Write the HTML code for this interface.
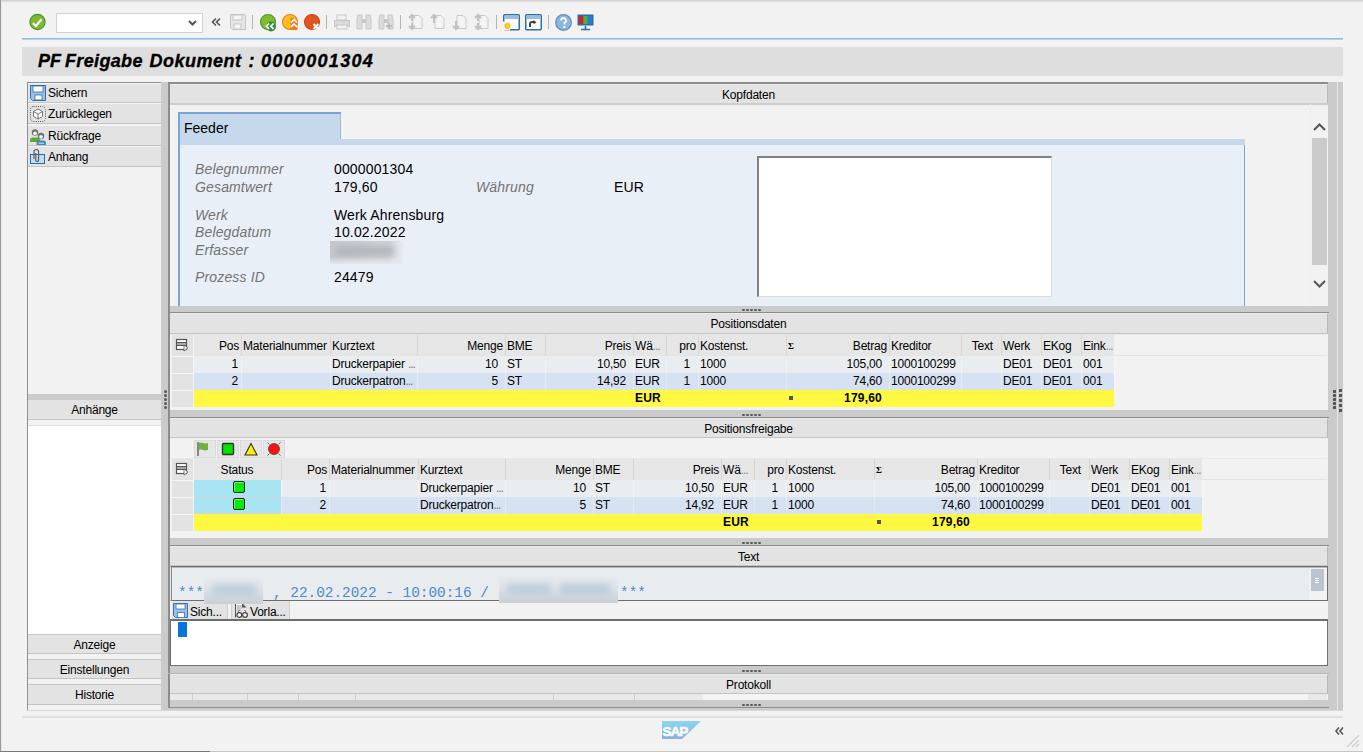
<!DOCTYPE html><html><head><meta charset="utf-8"><style>
*{margin:0;padding:0;box-sizing:border-box}
html,body{width:1363px;height:752px;overflow:hidden;background:#f2f2f2;font-family:"Liberation Sans",sans-serif;font-size:12px;color:#000}
div{position:absolute}
.t{white-space:nowrap;line-height:14px;letter-spacing:-0.2px}
.r{text-align:right}
.c{text-align:center}
svg{position:absolute;overflow:visible}
</style></head><body>
<div style="left:0px;top:0px;width:1363px;height:1px;background:#d2d2d2"></div>
<div style="left:0px;top:1px;width:1363px;height:1px;background:#e2e2e2"></div>
<div style="left:0px;top:2px;width:1363px;height:1px;background:#ebebeb"></div>
<div style="left:0px;top:0px;width:1px;height:752px;background:#9a9a9a"></div>
<div style="left:1px;top:1px;width:1px;height:751px;background:#e6e6e6"></div>
<div style="left:0px;top:751px;width:210px;height:1px;background:#78787c"></div>
<div style="left:210px;top:751px;width:1153px;height:1px;background:#c6c6c8"></div>
<svg style="left:29px;top:14px" width="17" height="16" viewBox="0 0 17 16"><circle cx="8.5" cy="8" r="7.6" fill="#7dbb2a" stroke="#4f8f3c" stroke-width="1.2"/><path d="M3.8 9.3L6.8 11.9L12.6 5.2" stroke="#fff" stroke-width="2.1" fill="none"/></svg>
<div style="left:56px;top:13px;width:147px;height:20px;background:#fff;border:1px solid #d2d2d2"></div>
<svg style="left:188px;top:20px" width="9" height="6" viewBox="0 0 9 6"><path d="M1 1l3.5 3.5L8 1" stroke="#555" stroke-width="2" fill="none"/></svg>
<svg style="left:211px;top:18px" width="10" height="8" viewBox="0 0 10 8"><path d="M5 0.5L1.5 4L5 7.5M9 0.5L5.5 4L9 7.5" stroke="#555" stroke-width="1.6" fill="none"/></svg>
<svg style="left:230px;top:14px" width="16" height="16" viewBox="0 0 16 16"><path d="M0.5 0.5h14l1 1v14h-13l-2-2z" fill="#e6e6e6" stroke="#c4c4c4"/><rect x="3" y="1" width="9" height="5" fill="#f6f6f6" stroke="#c4c4c4" stroke-width="1"/><rect x="4" y="10" width="7" height="5" fill="#f6f6f6" stroke="#c4c4c4"/></svg>
<div style="left:252px;top:15px;width:1px;height:14px;background:#b4b4b4"></div>
<svg style="left:260px;top:14px" width="16" height="16" viewBox="0 0 16 16"><circle cx="8" cy="8" r="7.5" fill="#80bd2a" stroke="#4f8f3c" stroke-width="1.1"/><circle cx="11" cy="12.5" r="5" fill="#3f8a3a"/><path d="M9 9.5l-2.7 2.7 2.7 2.7M13.5 9.5l-2.7 2.7 2.7 2.7" stroke="#fff" stroke-width="1.7" fill="none"/></svg>
<svg style="left:282px;top:14px" width="16" height="16" viewBox="0 0 16 16"><circle cx="8" cy="8" r="7.5" fill="#fbc01a" stroke="#ea7a22" stroke-width="1.1"/><path d="M8.5 3.5a7.5 7.5 0 0 1 7 5v7.5H8.5z" fill="#ec7a22"/><path d="M9 8.5l3-3 3 3M9 13l3-3 3 3" stroke="#fff" stroke-width="1.7" fill="none"/></svg>
<svg style="left:304px;top:14px" width="16" height="16" viewBox="0 0 16 16"><circle cx="8" cy="8" r="7.5" fill="#e0561c" stroke="#c9461a" stroke-width="1.1"/><path d="M9.5 10l5 5M14.5 10l-5 5" stroke="#fff" stroke-width="1.9"/></svg>
<div style="left:326px;top:15px;width:1px;height:14px;background:#b4b4b4"></div>
<svg style="left:334px;top:14px" width="16" height="16" viewBox="0 0 16 16"><rect x="3" y="1" width="9" height="5" fill="none" stroke="#c8c8c8"/><rect x="0.5" y="6.5" width="15" height="6" fill="#dadada" stroke="#c8c8c8"/><rect x="3" y="11" width="10" height="4" fill="#f2f2f2" stroke="#c8c8c8"/></svg>
<svg style="left:356px;top:14px" width="16" height="16" viewBox="0 0 16 16"><path d="M2 1h4v14H1V5zM10 1h4l1 4v10h-5z" fill="#dcdcdc" stroke="#c8c8c8"/><rect x="6" y="5" width="4" height="4" fill="#c8c8c8"/></svg>
<svg style="left:378px;top:14px" width="16" height="16" viewBox="0 0 16 16"><path d="M2 1h4v14H1V5zM10 1h4l1 4v10h-5z" fill="#dcdcdc" stroke="#c8c8c8"/><rect x="6" y="5" width="4" height="4" fill="#c8c8c8"/><path d="M11 9v6M8 12h6" stroke="#bdbdbd" stroke-width="2"/></svg>
<div style="left:400px;top:15px;width:1px;height:14px;background:#b4b4b4"></div>
<svg style="left:408px;top:14px" width="16" height="16" viewBox="0 0 16 16"><path d="M5 1.5h6l3 3v10H5z" fill="#f4f4f4" stroke="#c8c8c8"/><path d="M4 0v7M1 4l3-3 3 3M4 9v7M1 12l3 3 3-3" stroke="#c2c2c2" stroke-width="2" fill="none"/></svg>
<svg style="left:430px;top:14px" width="16" height="16" viewBox="0 0 16 16"><path d="M5 1.5h6l3 3v10H5z" fill="#f4f4f4" stroke="#c8c8c8"/><path d="M4 1v8M1 4l3-3 3 3" stroke="#c2c2c2" stroke-width="2" fill="none"/></svg>
<svg style="left:452px;top:14px" width="16" height="16" viewBox="0 0 16 16"><path d="M5 1.5h6l3 3v10H5z" fill="#f4f4f4" stroke="#c8c8c8"/><path d="M4 7v8M1 12l3 3 3-3" stroke="#c2c2c2" stroke-width="2" fill="none"/></svg>
<svg style="left:474px;top:14px" width="16" height="16" viewBox="0 0 16 16"><path d="M5 1.5h6l3 3v10H5z" fill="#f4f4f4" stroke="#c8c8c8"/><path d="M4 0v7M1 4l3-3 3 3M4 9v7M1 12l3 3 3-3" stroke="#c2c2c2" stroke-width="2" fill="none"/></svg>
<div style="left:496px;top:15px;width:1px;height:14px;background:#b4b4b4"></div>
<svg style="left:503px;top:14px" width="17" height="17" viewBox="0 0 17 17"><rect x="0.75" y="0.75" width="15.5" height="15" rx="1" fill="#fff" stroke="#2f6ea6" stroke-width="1.5"/><rect x="1.5" y="1.5" width="14" height="3.5" fill="#9dbde0"/><path d="M0 12h7" stroke="#f2f2f2" stroke-width="9"/><circle cx="4.5" cy="12" r="3" fill="#fbb917"/><circle cx="4.5" cy="12" r="1.8" fill="#ffd21a"/></svg>
<svg style="left:525px;top:14px" width="17" height="17" viewBox="0 0 17 17"><rect x="0.75" y="0.75" width="15.5" height="15" rx="1" fill="#fff" stroke="#2f6ea6" stroke-width="1.5"/><rect x="1.5" y="1.5" width="14" height="3.5" fill="#9dbde0"/><path d="M5 13v-3q0-2 2-2h2" stroke="#444" stroke-width="2" fill="none"/><path d="M8.5 6v4.5l3-2.25z" fill="#444"/></svg>
<div style="left:548px;top:15px;width:1px;height:14px;background:#b4b4b4"></div>
<svg style="left:555px;top:14px" width="17" height="17" viewBox="0 0 17 17"><circle cx="8.5" cy="8.5" r="7.8" fill="#8fb5dd" stroke="#5d8fc4" stroke-width="1.3"/><path d="M6 6.5a2.5 2.5 0 1 1 3.5 2.3V10.5" stroke="#fff" stroke-width="1.8" fill="none"/><rect x="8.3" y="12" width="2" height="2" fill="#fff"/></svg>
<svg style="left:577px;top:14px" width="17" height="16" viewBox="0 0 17 16"><rect x="0.5" y="0.5" width="16" height="11" fill="#2e6ea6"/><rect x="2" y="2" width="4.3" height="8" fill="#e11c1c"/><rect x="6.3" y="2" width="4.4" height="8" fill="#4bb33a"/><rect x="10.7" y="2" width="4.3" height="8" fill="#2b7ad1"/><path d="M8.5 12v3M4 15.5h9" stroke="#2e6ea6" stroke-width="1.6"/></svg>
<div style="left:22px;top:38px;width:1321px;height:1px;background:#8cbfe0"></div>
<div style="left:22px;top:39px;width:1321px;height:1px;background:#b2d5ec"></div>
<div style="left:22px;top:47px;width:1321px;height:29px;background:#dedede"></div>
<div class="t" style="left:38px;top:50px;font-size:18px;font-weight:bold;font-style:italic;line-height:22px;letter-spacing:0;-webkit-text-stroke:0.35px #000;">PF</div>
<div class="t" style="left:65px;top:50px;font-size:18px;font-weight:bold;font-style:italic;line-height:22px;letter-spacing:0;-webkit-text-stroke:0.35px #000;letter-spacing:0.35px">Freigabe</div>
<div class="t" style="left:149.5px;top:50px;font-size:18px;font-weight:bold;font-style:italic;line-height:22px;letter-spacing:0;-webkit-text-stroke:0.35px #000;letter-spacing:0.5px">Dokument</div>
<div class="t" style="left:248.5px;top:50px;font-size:18px;font-weight:bold;font-style:italic;line-height:22px;letter-spacing:0;-webkit-text-stroke:0.35px #000;">:</div>
<div class="t" style="left:261px;top:50px;font-size:18px;font-weight:bold;font-style:italic;line-height:22px;letter-spacing:0;-webkit-text-stroke:0.35px #000;letter-spacing:1.3px">0000001304</div>
<div style="left:27px;top:82px;width:134px;height:629px;background:#f2f2f2"></div>
<div style="left:27px;top:82px;width:1px;height:629px;background:#8f8f8f"></div>
<div style="left:27px;top:82px;width:134px;height:1px;background:#8f8f8f"></div>
<div style="left:28px;top:83px;width:133px;height:20px;background:#e3e3e3;border-top:1px solid #f4f4f4;border-bottom:1px solid #c4c4c4"></div>
<svg style="left:30px;top:85px" width="16" height="16" viewBox="0 0 16 16"><path d="M0.5 0.5h15v15h-13l-2-2z" fill="#9dc0e3" stroke="#2a70ae"/><rect x="3" y="1" width="10" height="6" fill="#fff" stroke="#2a70ae" stroke-width="0.8"/><rect x="5" y="10" width="7" height="5" fill="#fff" stroke="#2a70ae" stroke-width="0.8"/></svg>
<div class="t" style="left:48px;top:86px;">Sichern</div>
<div style="left:28px;top:103px;width:133px;height:21px;background:#e3e3e3;border-top:1px solid #f4f4f4;border-bottom:1px solid #c4c4c4"></div>
<svg style="left:30px;top:106px" width="16" height="16" viewBox="0 0 16 16"><rect x="0.5" y="0.5" width="15" height="15" rx="3" fill="none" stroke="#555" stroke-dasharray="1 1.2"/><path d="M8 3l4.5 2.5v5L8 13l-4.5-2.5v-5z" fill="#fff" stroke="#777"/><path d="M3.5 5.5L8 8l4.5-2.5M8 8v5" stroke="#777" fill="none"/></svg>
<div class="t" style="left:48px;top:107px;">Zurücklegen</div>
<div style="left:28px;top:125px;width:133px;height:21px;background:#e3e3e3;border-top:1px solid #f4f4f4;border-bottom:1px solid #c4c4c4"></div>
<svg style="left:30px;top:129px" width="16" height="16" viewBox="0 0 16 16"><circle cx="5" cy="3.5" r="3.2" fill="#707070"/><circle cx="5" cy="4.3" r="1.9" fill="#f4f4f4"/><path d="M0 11.5q0-3 3-3h4q3 0 3 3v1.5H0z" fill="#5aab32"/><circle cx="11" cy="7" r="3.2" fill="#707070"/><circle cx="11" cy="7.8" r="1.9" fill="#f4f4f4"/><path d="M6.5 14.5q0-3 3-3h3.5q3 0 3 3v1.5h-9.5z" fill="#3a88c6"/><path d="M8.5 14.2h5.5" stroke="#d9ecf9" stroke-width="1"/></svg>
<div class="t" style="left:48px;top:129px;">Rückfrage</div>
<div style="left:28px;top:146px;width:133px;height:21px;background:#e3e3e3;border-top:1px solid #f4f4f4;border-bottom:1px solid #c4c4c4"></div>
<svg style="left:30px;top:149px" width="16" height="16" viewBox="0 0 16 16"><rect x="0.5" y="5.5" width="14" height="9" fill="#c5dcf0" stroke="#2070b0"/><path d="M4 10V2.8a2.3 2.3 0 0 1 4.6 0V11a1.4 1.4 0 0 1-2.8 0V4" stroke="#555" stroke-width="1.1" fill="none"/></svg>
<div class="t" style="left:48px;top:150px;">Anhang</div>
<div style="left:28px;top:394px;width:133px;height:6px;background:#cbcbcb"></div>
<div style="left:28px;top:400px;width:133px;height:20px;background:#e3e3e3;border-bottom:1px solid #c4c4c4"></div>
<div class="t" style="left:28px;top:403px;width:133px;text-align:center">Anhänge</div>
<div style="left:28px;top:421px;width:133px;height:5px;background:#f2f2f2;border-bottom:1px solid #e0e0e0"></div>
<div style="left:28px;top:426px;width:133px;height:208px;background:#fff"></div>
<div style="left:28px;top:634px;width:133px;height:20px;background:#e3e3e3;border-top:1px solid #c8c8c8;border-bottom:1px solid #c4c4c4"></div>
<div class="t" style="left:28px;top:638px;width:133px;text-align:center">Anzeige</div>
<div style="left:28px;top:659px;width:133px;height:20px;background:#e3e3e3;border-top:1px solid #c8c8c8;border-bottom:1px solid #c4c4c4"></div>
<div class="t" style="left:28px;top:663px;width:133px;text-align:center">Einstellungen</div>
<div style="left:28px;top:684px;width:133px;height:21px;background:#e3e3e3;border-top:1px solid #c8c8c8;border-bottom:1px solid #c4c4c4"></div>
<div class="t" style="left:28px;top:688px;width:133px;text-align:center">Historie</div>
<div style="left:161px;top:82px;width:7px;height:629px;background:#cbcbcb"></div>
<div style="left:164px;top:390px;width:3px;height:3px;background:#5a5a5a;border-radius:1.5px"></div>
<div style="left:164px;top:394px;width:3px;height:3px;background:#5a5a5a;border-radius:1.5px"></div>
<div style="left:164px;top:398px;width:3px;height:3px;background:#5a5a5a;border-radius:1.5px"></div>
<div style="left:164px;top:402px;width:3px;height:3px;background:#5a5a5a;border-radius:1.5px"></div>
<div style="left:164px;top:406px;width:3px;height:3px;background:#5a5a5a;border-radius:1.5px"></div>
<div style="left:168px;top:82px;width:1160px;height:629px;background:#f2f2f2"></div>
<div style="left:168px;top:82px;width:2px;height:629px;background:#8c8c8c"></div>
<div style="left:168px;top:82px;width:1161px;height:2px;background:#8c8c8c"></div>
<div style="left:1328px;top:82px;width:9px;height:629px;background:#cbcbcb"></div>
<div style="left:1337px;top:82px;width:1px;height:629px;background:#e4e4e4"></div>
<div style="left:1338px;top:82px;width:5px;height:629px;background:#cbcbcb"></div>
<div style="left:1333px;top:390px;width:3px;height:3px;background:#555"></div>
<div style="left:1339px;top:389px;width:3px;height:3px;background:#555"></div>
<div style="left:1333px;top:394px;width:3px;height:3px;background:#555"></div>
<div style="left:1339px;top:394px;width:3px;height:3px;background:#555"></div>
<div style="left:1333px;top:398px;width:3px;height:3px;background:#555"></div>
<div style="left:1339px;top:399px;width:3px;height:3px;background:#555"></div>
<div style="left:1333px;top:402px;width:3px;height:3px;background:#555"></div>
<div style="left:1339px;top:404px;width:3px;height:3px;background:#555"></div>
<div style="left:1333px;top:406px;width:3px;height:3px;background:#555"></div>
<div style="left:1339px;top:409px;width:3px;height:3px;background:#555"></div>
<div style="left:170px;top:84px;width:1158px;height:20px;background:#e3e3e3;border-top:1px solid #ebebeb;border-bottom:1px solid #c4c4c4;border-right:1px solid #b8b8b8"></div>
<div class="t" style="left:170px;top:88px;width:1157px;text-align:center">Kopfdaten</div>
<div style="left:170px;top:103px;width:1158px;height:2px;background:#cdcdcd"></div>
<svg style="left:1313px;top:123px" width="13" height="8" viewBox="0 0 13 8"><path d="M1 7l5.5-5.5L12 7" stroke="#555" stroke-width="2" fill="none"/></svg>
<div style="left:1312px;top:138px;width:15px;height:127px;background:#cbcbcb"></div>
<svg style="left:1313px;top:280px" width="13" height="8" viewBox="0 0 13 8"><path d="M1 1l5.5 5.5L12 1" stroke="#555" stroke-width="2" fill="none"/></svg>
<div style="left:1310px;top:104px;width:1px;height:202px;background:#eeeeee"></div>
<div style="left:178px;top:112px;width:163px;height:27px;background:#c6d9ec;border-top:2px solid #7ba3d3;border-left:2px solid #7ba3d3;border-right:1px solid #97b8de"></div>
<div class="t" style="left:184px;top:120px;font-size:14px;line-height:16px;letter-spacing:0">Feeder</div>
<div style="left:178px;top:139px;width:1067px;height:6px;background:#c6d9ec;border-left:2px solid #7ba3d3"></div>
<div style="left:178px;top:145px;width:1067px;height:161px;background:#e9eff7;border-left:2px solid #7ba3d3;border-right:1px solid #7ba3d3"></div>
<div class="t" style="left:195px;top:161px;font-size:14px;line-height:16px;font-style:italic;color:#737373;letter-spacing:0.15px">Belegnummer</div>
<div class="t" style="left:334px;top:161px;font-size:14px;line-height:16px;letter-spacing:0.15px">0000001304</div>
<div class="t" style="left:195px;top:179px;font-size:14px;line-height:16px;font-style:italic;color:#737373;letter-spacing:0.15px">Gesamtwert</div>
<div class="t" style="left:334px;top:179px;font-size:14px;line-height:16px;letter-spacing:0.15px">179,60</div>
<div class="t" style="left:195px;top:207px;font-size:14px;line-height:16px;font-style:italic;color:#737373;letter-spacing:0.15px">Werk</div>
<div class="t" style="left:334px;top:207px;font-size:14px;line-height:16px;letter-spacing:0.15px">Werk Ahrensburg</div>
<div class="t" style="left:195px;top:224px;font-size:14px;line-height:16px;font-style:italic;color:#737373;letter-spacing:0.15px">Belegdatum</div>
<div class="t" style="left:334px;top:224px;font-size:14px;line-height:16px;letter-spacing:0.15px">10.02.2022</div>
<div class="t" style="left:195px;top:242px;font-size:14px;line-height:16px;font-style:italic;color:#737373;letter-spacing:0.15px">Erfasser</div>
<div class="t" style="left:195px;top:269px;font-size:14px;line-height:16px;font-style:italic;color:#737373;letter-spacing:0.15px">Prozess ID</div>
<div class="t" style="left:334px;top:269px;font-size:14px;line-height:16px;letter-spacing:0.15px">24479</div>
<div class="t" style="left:476px;top:179px;font-size:14px;line-height:16px;font-style:italic;color:#737373;letter-spacing:0.15px">Währung</div>
<div class="t" style="left:614px;top:179px;font-size:14px;line-height:16px;letter-spacing:0.15px">EUR</div>
<div style="left:757px;top:156px;width:295px;height:141px;background:#fff;border-top:2px solid #808080;border-left:2px solid #808080;border-right:1px solid #dcdcdc;border-bottom:1px solid #dcdcdc"></div>
<div style="left:170px;top:306px;width:1158px;height:6px;background:#cbcbcb"></div>
<div style="left:168px;top:312px;width:1161px;height:1px;background:#8c8c8c"></div>
<div style="left:170px;top:313px;width:1158px;height:21px;background:#e3e3e3;border-top:1px solid #ebebeb;border-bottom:1px solid #c4c4c4;border-right:1px solid #b8b8b8"></div>
<div class="t" style="left:170px;top:317px;width:1157px;text-align:center">Positionsdaten</div>
<div style="left:742px;top:309px;width:3px;height:2px;background:#5a5a5a;border-radius:1px"></div>
<div style="left:746px;top:309px;width:3px;height:2px;background:#5a5a5a;border-radius:1px"></div>
<div style="left:750px;top:309px;width:3px;height:2px;background:#5a5a5a;border-radius:1px"></div>
<div style="left:754px;top:309px;width:3px;height:2px;background:#5a5a5a;border-radius:1px"></div>
<div style="left:758px;top:309px;width:3px;height:2px;background:#5a5a5a;border-radius:1px"></div>
<div style="left:170px;top:334px;width:1157px;height:22px;background:#f2f2f2"></div>
<div style="left:172px;top:335px;width:21px;height:21px;background:#e3e3e3"></div>
<svg style="left:176px;top:339px" width="13" height="13" viewBox="0 0 13 13"><rect x="0.5" y="0.5" width="10" height="10" fill="#fff" stroke="#555" stroke-width="1.2"/><path d="M1 3.5h9M1 6.5h9" stroke="#555"/><rect x="1" y="4" width="9" height="2" fill="#aaa"/><path d="M8 6l4 3-4 3z" fill="#fff" stroke="#555" stroke-width="0.8"/></svg>
<div style="left:194px;top:335px;width:920px;height:21px;background:#e6e6e6"></div>
<div style="left:193px;top:356px;width:1134px;height:0px;"></div>
<div style="left:241px;top:335px;width:1px;height:21px;background:#d6d6d6"></div>
<div class="t" style="left:193px;top:339px;width:46px;text-align:right">Pos</div>
<div style="left:330px;top:335px;width:1px;height:21px;background:#d6d6d6"></div>
<div class="t" style="left:243px;top:339px;">Materialnummer</div>
<div style="left:417px;top:335px;width:1px;height:21px;background:#d6d6d6"></div>
<div class="t" style="left:332px;top:339px;">Kurztext</div>
<div style="left:505px;top:335px;width:1px;height:21px;background:#d6d6d6"></div>
<div class="t" style="left:417px;top:339px;width:86px;text-align:right">Menge</div>
<div style="left:545px;top:335px;width:1px;height:21px;background:#d6d6d6"></div>
<div class="t" style="left:507px;top:339px;">BME</div>
<div style="left:633px;top:335px;width:1px;height:21px;background:#d6d6d6"></div>
<div class="t" style="left:545px;top:339px;width:86px;text-align:right">Preis</div>
<div style="left:666px;top:335px;width:1px;height:21px;background:#d6d6d6"></div>
<div class="t" style="left:635px;top:339px;">Wä<span style="letter-spacing:-1px;color:#888">...</span></div>
<div style="left:698px;top:335px;width:1px;height:21px;background:#d6d6d6"></div>
<div class="t" style="left:666px;top:339px;width:30px;text-align:right">pro</div>
<div style="left:786px;top:335px;width:1px;height:21px;background:#d6d6d6"></div>
<div class="t" style="left:700px;top:339px;">Kostenst.</div>
<div style="left:889px;top:335px;width:1px;height:21px;background:#d6d6d6"></div>
<div class="t" style="left:786px;top:339px;width:101px;text-align:right">Betrag</div>
<div style="left:961px;top:335px;width:1px;height:21px;background:#d6d6d6"></div>
<div class="t" style="left:891px;top:339px;">Kreditor</div>
<div style="left:1001px;top:335px;width:1px;height:21px;background:#d6d6d6"></div>
<div class="t" style="left:961px;top:339px;width:32px;text-align:right">Text</div>
<div style="left:1041px;top:335px;width:1px;height:21px;background:#d6d6d6"></div>
<div class="t" style="left:1003px;top:339px;">Werk</div>
<div style="left:1081px;top:335px;width:1px;height:21px;background:#d6d6d6"></div>
<div class="t" style="left:1043px;top:339px;">EKog</div>
<div class="t" style="left:1083px;top:339px;">Eink<span style="letter-spacing:-1px;color:#888">...</span></div>
<div style="left:1114px;top:355px;width:213px;height:1px;background:#e4e4e4"></div>
<div style="left:170px;top:334px;width:1157px;height:1px;background:#e8e8e8"></div>
<div style="left:172px;top:356px;width:21px;height:17px;background:#e3e3e3;border-top:1px solid #f6f6f6"></div>
<div style="left:194px;top:356px;width:920px;height:17px;background:#eaedf0"></div>
<div style="left:241px;top:356px;width:1px;height:17px;background:rgba(255,255,255,0.3)"></div>
<div class="t" style="left:193px;top:357px;width:45px;text-align:right">1</div>
<div style="left:330px;top:356px;width:1px;height:17px;background:rgba(255,255,255,0.3)"></div>
<div style="left:417px;top:356px;width:1px;height:17px;background:rgba(255,255,255,0.3)"></div>
<div class="t" style="left:332px;top:357px;">Druckerpapier <span style="color:#777;letter-spacing:-1px">...</span></div>
<div style="left:505px;top:356px;width:1px;height:17px;background:rgba(255,255,255,0.3)"></div>
<div class="t" style="left:417px;top:357px;width:81px;text-align:right">10</div>
<div style="left:545px;top:356px;width:1px;height:17px;background:rgba(255,255,255,0.3)"></div>
<div class="t" style="left:507px;top:357px;">ST</div>
<div style="left:633px;top:356px;width:1px;height:17px;background:rgba(255,255,255,0.3)"></div>
<div class="t" style="left:545px;top:357px;width:81px;text-align:right">10,50</div>
<div style="left:666px;top:356px;width:1px;height:17px;background:rgba(255,255,255,0.3)"></div>
<div class="t" style="left:635px;top:357px;">EUR</div>
<div style="left:698px;top:356px;width:1px;height:17px;background:rgba(255,255,255,0.3)"></div>
<div class="t" style="left:666px;top:357px;width:24px;text-align:right">1</div>
<div style="left:786px;top:356px;width:1px;height:17px;background:rgba(255,255,255,0.3)"></div>
<div class="t" style="left:700px;top:357px;">1000</div>
<div style="left:889px;top:356px;width:1px;height:17px;background:rgba(255,255,255,0.3)"></div>
<div class="t" style="left:786px;top:357px;width:96px;text-align:right">105,00</div>
<div style="left:961px;top:356px;width:1px;height:17px;background:rgba(255,255,255,0.3)"></div>
<div class="t" style="left:891px;top:357px;">1000100299</div>
<div style="left:1001px;top:356px;width:1px;height:17px;background:rgba(255,255,255,0.3)"></div>
<div style="left:1041px;top:356px;width:1px;height:17px;background:rgba(255,255,255,0.3)"></div>
<div class="t" style="left:1003px;top:357px;">DE01</div>
<div style="left:1081px;top:356px;width:1px;height:17px;background:rgba(255,255,255,0.3)"></div>
<div class="t" style="left:1043px;top:357px;">DE01</div>
<div style="left:1114px;top:356px;width:1px;height:17px;background:rgba(255,255,255,0.3)"></div>
<div class="t" style="left:1083px;top:357px;">001</div>
<div style="left:172px;top:373px;width:21px;height:17px;background:#e3e3e3;border-top:1px solid #f6f6f6"></div>
<div style="left:194px;top:373px;width:920px;height:17px;background:#d6e2f1"></div>
<div style="left:241px;top:373px;width:1px;height:17px;background:rgba(255,255,255,0.3)"></div>
<div class="t" style="left:193px;top:374px;width:45px;text-align:right">2</div>
<div style="left:330px;top:373px;width:1px;height:17px;background:rgba(255,255,255,0.3)"></div>
<div style="left:417px;top:373px;width:1px;height:17px;background:rgba(255,255,255,0.3)"></div>
<div class="t" style="left:332px;top:374px;">Druckerpatron<span style="color:#777;letter-spacing:-1px">...</span></div>
<div style="left:505px;top:373px;width:1px;height:17px;background:rgba(255,255,255,0.3)"></div>
<div class="t" style="left:417px;top:374px;width:81px;text-align:right">5</div>
<div style="left:545px;top:373px;width:1px;height:17px;background:rgba(255,255,255,0.3)"></div>
<div class="t" style="left:507px;top:374px;">ST</div>
<div style="left:633px;top:373px;width:1px;height:17px;background:rgba(255,255,255,0.3)"></div>
<div class="t" style="left:545px;top:374px;width:81px;text-align:right">14,92</div>
<div style="left:666px;top:373px;width:1px;height:17px;background:rgba(255,255,255,0.3)"></div>
<div class="t" style="left:635px;top:374px;">EUR</div>
<div style="left:698px;top:373px;width:1px;height:17px;background:rgba(255,255,255,0.3)"></div>
<div class="t" style="left:666px;top:374px;width:24px;text-align:right">1</div>
<div style="left:786px;top:373px;width:1px;height:17px;background:rgba(255,255,255,0.3)"></div>
<div class="t" style="left:700px;top:374px;">1000</div>
<div style="left:889px;top:373px;width:1px;height:17px;background:rgba(255,255,255,0.3)"></div>
<div class="t" style="left:786px;top:374px;width:96px;text-align:right">74,60</div>
<div style="left:961px;top:373px;width:1px;height:17px;background:rgba(255,255,255,0.3)"></div>
<div class="t" style="left:891px;top:374px;">1000100299</div>
<div style="left:1001px;top:373px;width:1px;height:17px;background:rgba(255,255,255,0.3)"></div>
<div style="left:1041px;top:373px;width:1px;height:17px;background:rgba(255,255,255,0.3)"></div>
<div class="t" style="left:1003px;top:374px;">DE01</div>
<div style="left:1081px;top:373px;width:1px;height:17px;background:rgba(255,255,255,0.3)"></div>
<div class="t" style="left:1043px;top:374px;">DE01</div>
<div style="left:1114px;top:373px;width:1px;height:17px;background:rgba(255,255,255,0.3)"></div>
<div class="t" style="left:1083px;top:374px;">001</div>
<div style="left:172px;top:390px;width:21px;height:17px;background:#e3e3e3;border-top:1px solid #f6f6f6"></div>
<div style="left:194px;top:390px;width:920px;height:17px;background:#fff843"></div>
<div class="t" style="left:635px;top:391px;font-weight:bold;letter-spacing:0.2px;">EUR</div>
<div class="t" style="left:786px;top:391px;font-weight:bold;letter-spacing:0.2px;width:96px;text-align:right">179,60</div>
<div class="t" style="left:788px;top:338px;"><span style="font-size:9px;font-family:Liberation Serif;font-weight:bold">&Sigma;</span></div>
<div style="left:789px;top:396px;width:4px;height:4px;background:#555"></div>
<div style="left:170px;top:407px;width:1157px;height:3px;background:#f2f2f2"></div>
<div style="left:170px;top:410px;width:1158px;height:7px;background:#cbcbcb"></div>
<div style="left:168px;top:417px;width:1161px;height:1px;background:#8c8c8c"></div>
<div style="left:742px;top:414px;width:3px;height:2px;background:#5a5a5a;border-radius:1px"></div>
<div style="left:746px;top:414px;width:3px;height:2px;background:#5a5a5a;border-radius:1px"></div>
<div style="left:750px;top:414px;width:3px;height:2px;background:#5a5a5a;border-radius:1px"></div>
<div style="left:754px;top:414px;width:3px;height:2px;background:#5a5a5a;border-radius:1px"></div>
<div style="left:758px;top:414px;width:3px;height:2px;background:#5a5a5a;border-radius:1px"></div>
<div style="left:170px;top:418px;width:1158px;height:20px;background:#e3e3e3;border-top:1px solid #ebebeb;border-bottom:1px solid #c4c4c4;border-right:1px solid #b8b8b8"></div>
<div class="t" style="left:170px;top:422px;width:1157px;text-align:center">Positionsfreigabe</div>
<div style="left:194px;top:440px;width:22px;height:18px;background:#e6e6e6;border:1px solid #dadada"></div>
<svg style="left:196px;top:441px" width="18" height="16" viewBox="0 0 18 16"><path d="M2 1v14" stroke="#666" stroke-width="1.5"/><path d="M3 2c3-1.5 5 1.5 9 0v7c-4 1.5-6-1.5-9 0z" fill="#6fb33f"/></svg>
<div style="left:217px;top:440px;width:22px;height:18px;background:#e6e6e6;border:1px solid #dadada"></div>
<svg style="left:219px;top:441px" width="18" height="16" viewBox="0 0 18 16"><rect x="3.5" y="2.5" width="11" height="11" rx="1" fill="#00e400" stroke="#333" stroke-width="1.4"/></svg>
<div style="left:240px;top:440px;width:22px;height:18px;background:#e6e6e6;border:1px solid #dadada"></div>
<svg style="left:242px;top:441px" width="18" height="16" viewBox="0 0 18 16"><path d="M9 2.5L15 14H3z" fill="#ffee00" stroke="#333" stroke-width="1.1"/></svg>
<div style="left:263px;top:440px;width:22px;height:18px;background:#e6e6e6;border:1px solid #dadada"></div>
<svg style="left:265px;top:441px" width="18" height="16" viewBox="0 0 18 16"><circle cx="9" cy="8" r="5.5" fill="#ff1010" stroke="#444" stroke-width="0.8"/><path d="M2.5 1.5l2 2M15.5 1.5l-2 2M2.5 14.5l2-2M15.5 14.5l-2-2" stroke="#444" stroke-width="0.8"/></svg>
<div style="left:170px;top:458px;width:1157px;height:22px;background:#f2f2f2"></div>
<div style="left:172px;top:459px;width:21px;height:21px;background:#e3e3e3"></div>
<svg style="left:176px;top:463px" width="13" height="13" viewBox="0 0 13 13"><rect x="0.5" y="0.5" width="10" height="10" fill="#fff" stroke="#555" stroke-width="1.2"/><path d="M1 3.5h9M1 6.5h9" stroke="#555"/><rect x="1" y="4" width="9" height="2" fill="#aaa"/><path d="M8 6l4 3-4 3z" fill="#fff" stroke="#555" stroke-width="0.8"/></svg>
<div style="left:194px;top:459px;width:1008px;height:21px;background:#e6e6e6"></div>
<div style="left:193px;top:480px;width:1134px;height:0px;"></div>
<div style="left:281px;top:459px;width:1px;height:21px;background:#d6d6d6"></div>
<div class="t" style="left:193px;top:463px;width:88px;text-align:center">Status</div>
<div style="left:329px;top:459px;width:1px;height:21px;background:#d6d6d6"></div>
<div class="t" style="left:281px;top:463px;width:46px;text-align:right">Pos</div>
<div style="left:418px;top:459px;width:1px;height:21px;background:#d6d6d6"></div>
<div class="t" style="left:331px;top:463px;">Materialnummer</div>
<div style="left:505px;top:459px;width:1px;height:21px;background:#d6d6d6"></div>
<div class="t" style="left:420px;top:463px;">Kurztext</div>
<div style="left:593px;top:459px;width:1px;height:21px;background:#d6d6d6"></div>
<div class="t" style="left:505px;top:463px;width:86px;text-align:right">Menge</div>
<div style="left:633px;top:459px;width:1px;height:21px;background:#d6d6d6"></div>
<div class="t" style="left:595px;top:463px;">BME</div>
<div style="left:721px;top:459px;width:1px;height:21px;background:#d6d6d6"></div>
<div class="t" style="left:633px;top:463px;width:86px;text-align:right">Preis</div>
<div style="left:754px;top:459px;width:1px;height:21px;background:#d6d6d6"></div>
<div class="t" style="left:723px;top:463px;">Wä<span style="letter-spacing:-1px;color:#888">...</span></div>
<div style="left:786px;top:459px;width:1px;height:21px;background:#d6d6d6"></div>
<div class="t" style="left:754px;top:463px;width:30px;text-align:right">pro</div>
<div style="left:874px;top:459px;width:1px;height:21px;background:#d6d6d6"></div>
<div class="t" style="left:788px;top:463px;">Kostenst.</div>
<div style="left:977px;top:459px;width:1px;height:21px;background:#d6d6d6"></div>
<div class="t" style="left:874px;top:463px;width:101px;text-align:right">Betrag</div>
<div style="left:1049px;top:459px;width:1px;height:21px;background:#d6d6d6"></div>
<div class="t" style="left:979px;top:463px;">Kreditor</div>
<div style="left:1089px;top:459px;width:1px;height:21px;background:#d6d6d6"></div>
<div class="t" style="left:1049px;top:463px;width:32px;text-align:right">Text</div>
<div style="left:1129px;top:459px;width:1px;height:21px;background:#d6d6d6"></div>
<div class="t" style="left:1091px;top:463px;">Werk</div>
<div style="left:1169px;top:459px;width:1px;height:21px;background:#d6d6d6"></div>
<div class="t" style="left:1131px;top:463px;">EKog</div>
<div class="t" style="left:1171px;top:463px;">Eink<span style="letter-spacing:-1px;color:#888">...</span></div>
<div style="left:1202px;top:479px;width:125px;height:1px;background:#e4e4e4"></div>
<div style="left:170px;top:458px;width:1157px;height:1px;background:#e8e8e8"></div>
<div style="left:172px;top:480px;width:21px;height:17px;background:#e3e3e3;border-top:1px solid #f6f6f6"></div>
<div style="left:194px;top:480px;width:1008px;height:17px;background:#eaedf0"></div>
<div style="left:281px;top:480px;width:1px;height:17px;background:rgba(255,255,255,0.3)"></div>
<div style="left:194px;top:480px;width:87px;height:17px;background:#a9e4f3;border-bottom:1px solid #d2d8da"></div><div style="left:233px;top:480px;width:12px;height:12px;margin-top:1px;background:#00ee00;border:1.5px solid #1e1e1e;border-radius:2px;box-shadow:inset 1px 1px 0 #8fe58f"></div>
<div style="left:329px;top:480px;width:1px;height:17px;background:rgba(255,255,255,0.3)"></div>
<div class="t" style="left:281px;top:481px;width:45px;text-align:right">1</div>
<div style="left:418px;top:480px;width:1px;height:17px;background:rgba(255,255,255,0.3)"></div>
<div style="left:505px;top:480px;width:1px;height:17px;background:rgba(255,255,255,0.3)"></div>
<div class="t" style="left:420px;top:481px;">Druckerpapier <span style="color:#777;letter-spacing:-1px">...</span></div>
<div style="left:593px;top:480px;width:1px;height:17px;background:rgba(255,255,255,0.3)"></div>
<div class="t" style="left:505px;top:481px;width:81px;text-align:right">10</div>
<div style="left:633px;top:480px;width:1px;height:17px;background:rgba(255,255,255,0.3)"></div>
<div class="t" style="left:595px;top:481px;">ST</div>
<div style="left:721px;top:480px;width:1px;height:17px;background:rgba(255,255,255,0.3)"></div>
<div class="t" style="left:633px;top:481px;width:81px;text-align:right">10,50</div>
<div style="left:754px;top:480px;width:1px;height:17px;background:rgba(255,255,255,0.3)"></div>
<div class="t" style="left:723px;top:481px;">EUR</div>
<div style="left:786px;top:480px;width:1px;height:17px;background:rgba(255,255,255,0.3)"></div>
<div class="t" style="left:754px;top:481px;width:24px;text-align:right">1</div>
<div style="left:874px;top:480px;width:1px;height:17px;background:rgba(255,255,255,0.3)"></div>
<div class="t" style="left:788px;top:481px;">1000</div>
<div style="left:977px;top:480px;width:1px;height:17px;background:rgba(255,255,255,0.3)"></div>
<div class="t" style="left:874px;top:481px;width:96px;text-align:right">105,00</div>
<div style="left:1049px;top:480px;width:1px;height:17px;background:rgba(255,255,255,0.3)"></div>
<div class="t" style="left:979px;top:481px;">1000100299</div>
<div style="left:1089px;top:480px;width:1px;height:17px;background:rgba(255,255,255,0.3)"></div>
<div style="left:1129px;top:480px;width:1px;height:17px;background:rgba(255,255,255,0.3)"></div>
<div class="t" style="left:1091px;top:481px;">DE01</div>
<div style="left:1169px;top:480px;width:1px;height:17px;background:rgba(255,255,255,0.3)"></div>
<div class="t" style="left:1131px;top:481px;">DE01</div>
<div style="left:1202px;top:480px;width:1px;height:17px;background:rgba(255,255,255,0.3)"></div>
<div class="t" style="left:1171px;top:481px;">001</div>
<div style="left:172px;top:497px;width:21px;height:17px;background:#e3e3e3;border-top:1px solid #f6f6f6"></div>
<div style="left:194px;top:497px;width:1008px;height:17px;background:#d6e2f1"></div>
<div style="left:281px;top:497px;width:1px;height:17px;background:rgba(255,255,255,0.3)"></div>
<div style="left:194px;top:497px;width:87px;height:17px;background:#a9e4f3;border-bottom:1px solid #d2d8da"></div><div style="left:233px;top:497px;width:12px;height:12px;margin-top:1px;background:#00ee00;border:1.5px solid #1e1e1e;border-radius:2px;box-shadow:inset 1px 1px 0 #8fe58f"></div>
<div style="left:329px;top:497px;width:1px;height:17px;background:rgba(255,255,255,0.3)"></div>
<div class="t" style="left:281px;top:498px;width:45px;text-align:right">2</div>
<div style="left:418px;top:497px;width:1px;height:17px;background:rgba(255,255,255,0.3)"></div>
<div style="left:505px;top:497px;width:1px;height:17px;background:rgba(255,255,255,0.3)"></div>
<div class="t" style="left:420px;top:498px;">Druckerpatron<span style="color:#777;letter-spacing:-1px">...</span></div>
<div style="left:593px;top:497px;width:1px;height:17px;background:rgba(255,255,255,0.3)"></div>
<div class="t" style="left:505px;top:498px;width:81px;text-align:right">5</div>
<div style="left:633px;top:497px;width:1px;height:17px;background:rgba(255,255,255,0.3)"></div>
<div class="t" style="left:595px;top:498px;">ST</div>
<div style="left:721px;top:497px;width:1px;height:17px;background:rgba(255,255,255,0.3)"></div>
<div class="t" style="left:633px;top:498px;width:81px;text-align:right">14,92</div>
<div style="left:754px;top:497px;width:1px;height:17px;background:rgba(255,255,255,0.3)"></div>
<div class="t" style="left:723px;top:498px;">EUR</div>
<div style="left:786px;top:497px;width:1px;height:17px;background:rgba(255,255,255,0.3)"></div>
<div class="t" style="left:754px;top:498px;width:24px;text-align:right">1</div>
<div style="left:874px;top:497px;width:1px;height:17px;background:rgba(255,255,255,0.3)"></div>
<div class="t" style="left:788px;top:498px;">1000</div>
<div style="left:977px;top:497px;width:1px;height:17px;background:rgba(255,255,255,0.3)"></div>
<div class="t" style="left:874px;top:498px;width:96px;text-align:right">74,60</div>
<div style="left:1049px;top:497px;width:1px;height:17px;background:rgba(255,255,255,0.3)"></div>
<div class="t" style="left:979px;top:498px;">1000100299</div>
<div style="left:1089px;top:497px;width:1px;height:17px;background:rgba(255,255,255,0.3)"></div>
<div style="left:1129px;top:497px;width:1px;height:17px;background:rgba(255,255,255,0.3)"></div>
<div class="t" style="left:1091px;top:498px;">DE01</div>
<div style="left:1169px;top:497px;width:1px;height:17px;background:rgba(255,255,255,0.3)"></div>
<div class="t" style="left:1131px;top:498px;">DE01</div>
<div style="left:1202px;top:497px;width:1px;height:17px;background:rgba(255,255,255,0.3)"></div>
<div class="t" style="left:1171px;top:498px;">001</div>
<div style="left:172px;top:514px;width:21px;height:17px;background:#e3e3e3;border-top:1px solid #f6f6f6"></div>
<div style="left:194px;top:514px;width:1008px;height:17px;background:#fff843"></div>
<div class="t" style="left:723px;top:515px;font-weight:bold;letter-spacing:0.2px;">EUR</div>
<div class="t" style="left:874px;top:515px;font-weight:bold;letter-spacing:0.2px;width:96px;text-align:right">179,60</div>
<div class="t" style="left:876px;top:462px;"><span style="font-size:9px;font-family:Liberation Serif;font-weight:bold">&Sigma;</span></div>
<div style="left:877px;top:520px;width:4px;height:4px;background:#555"></div>
<style>.st{background:#a9e4f3}</style>
<div style="left:170px;top:531px;width:1157px;height:7px;background:#f2f2f2"></div>
<div style="left:170px;top:538px;width:1158px;height:7px;background:#cbcbcb"></div>
<div style="left:168px;top:545px;width:1161px;height:1px;background:#8c8c8c"></div>
<div style="left:742px;top:542px;width:3px;height:2px;background:#5a5a5a;border-radius:1px"></div>
<div style="left:746px;top:542px;width:3px;height:2px;background:#5a5a5a;border-radius:1px"></div>
<div style="left:750px;top:542px;width:3px;height:2px;background:#5a5a5a;border-radius:1px"></div>
<div style="left:754px;top:542px;width:3px;height:2px;background:#5a5a5a;border-radius:1px"></div>
<div style="left:758px;top:542px;width:3px;height:2px;background:#5a5a5a;border-radius:1px"></div>
<div style="left:170px;top:546px;width:1158px;height:20px;background:#e3e3e3;border-top:1px solid #ebebeb;border-bottom:1px solid #c4c4c4;border-right:1px solid #b8b8b8"></div>
<div class="t" style="left:170px;top:550px;width:1157px;text-align:center">Text</div>
<div style="left:170px;top:566px;width:1158px;height:35px;background:#e9ecef;border:1px solid #6e6e6e;border-left:1px solid #e6e6e6;border-top:1px solid #6e6e6e"></div>
<div style="left:171px;top:567px;width:1px;height:34px;background:#8a8a8a"></div>
<div style="left:172px;top:567px;width:1155px;height:1px;background:#b8b8b8"></div>
<div style="left:1309px;top:568px;width:18px;height:32px;background:#f2f2f2"></div>
<div style="left:1311px;top:569px;width:13px;height:22px;background:#b9c4cf"></div>
<div style="left:1315px;top:578px;width:4px;height:1px;background:#fff"></div>
<div style="left:1315px;top:580px;width:4px;height:1px;background:#fff"></div>
<div style="left:1315px;top:582px;width:4px;height:1px;background:#fff"></div>
<div class="t" style="left:178px;top:585px;font-family:Liberation Mono,monospace;font-size:14.4px;color:#4a8bc9;line-height:16px;letter-spacing:0">***</div>
<div class="t" style="left:273px;top:585px;font-family:Liberation Mono,monospace;font-size:14.4px;color:#4a8bc9;line-height:16px;letter-spacing:0">, 22.02.2022 - 10:00:16 /</div>
<div class="t" style="left:620px;top:585px;font-family:Liberation Mono,monospace;font-size:14.4px;color:#4a8bc9;line-height:16px;letter-spacing:0">***</div>
<div style="left:170px;top:601px;width:1157px;height:19px;background:#f2f2f2"></div>
<div style="left:172px;top:601px;width:56px;height:18px;background:#e3e3e3;border-right:1px solid #cfcfcf"></div>
<svg style="left:173px;top:603px" width="15" height="15" viewBox="0 0 15 15"><path d="M0.5 0.5h14v14h-12l-2-2z" fill="#9dc0e3" stroke="#2f74b5"/><rect x="3" y="1" width="9" height="5" fill="#fff" stroke="#2f74b5" stroke-width="0.8"/><rect x="4.5" y="9.5" width="7" height="5" fill="#fff" stroke="#2f74b5" stroke-width="0.8"/></svg>
<div class="t" style="left:190px;top:605px;">Sich...</div>
<div style="left:231px;top:601px;width:59px;height:18px;background:#e3e3e3;border-left:1px solid #cfcfcf;border-right:1px solid #cfcfcf"></div>
<svg style="left:235px;top:603px" width="14" height="16" viewBox="0 0 14 16"><path d="M0.5 0.5v14" stroke="#555"/><path d="M1 1h6" stroke="#fff" stroke-width="2"/><path d="M2 3h5M2 5h5M2 7h4" stroke="#b0b0b0"/><path d="M7 0l4.5 4.5H7z" fill="#555"/><circle cx="4.3" cy="12" r="2.4" fill="#fff" stroke="#444" stroke-width="1.2"/><circle cx="10" cy="12" r="2.4" fill="#fff" stroke="#444" stroke-width="1.2"/><path d="M3 9l1.5-2M11 9l-1.5-2" stroke="#666"/></svg>
<div class="t" style="left:250px;top:605px;">Vorla...</div>
<div style="left:170px;top:619px;width:1158px;height:47px;background:#fff;border:1px solid #6e6e6e;border-top:2px solid #6e6e6e;border-right:1px solid #6e6e6e"></div>
<div style="left:178px;top:622px;width:9px;height:15px;background:#0a74da"></div>
<div style="left:170px;top:666px;width:1158px;height:7px;background:#cbcbcb"></div>
<div style="left:168px;top:673px;width:1161px;height:1px;background:#b4b4b4"></div>
<div style="left:742px;top:670px;width:3px;height:2px;background:#5a5a5a;border-radius:1px"></div>
<div style="left:746px;top:670px;width:3px;height:2px;background:#5a5a5a;border-radius:1px"></div>
<div style="left:750px;top:670px;width:3px;height:2px;background:#5a5a5a;border-radius:1px"></div>
<div style="left:754px;top:670px;width:3px;height:2px;background:#5a5a5a;border-radius:1px"></div>
<div style="left:758px;top:670px;width:3px;height:2px;background:#5a5a5a;border-radius:1px"></div>
<div style="left:170px;top:674px;width:1158px;height:20px;background:#e3e3e3;border-top:1px solid #ebebeb;border-bottom:1px solid #c4c4c4;border-right:1px solid #b8b8b8"></div>
<div class="t" style="left:170px;top:678px;width:1157px;text-align:center">Protokoll</div>
<div style="left:170px;top:694px;width:1157px;height:6px;background:#e9e9e9"></div>
<div style="left:703px;top:694px;width:605px;height:6px;background:#f4f4f4"></div>
<div style="left:192px;top:694px;width:1px;height:6px;background:#d0d0d0"></div>
<div style="left:247px;top:694px;width:1px;height:6px;background:#d0d0d0"></div>
<div style="left:298px;top:694px;width:1px;height:6px;background:#d0d0d0"></div>
<div style="left:355px;top:694px;width:1px;height:6px;background:#d0d0d0"></div>
<div style="left:553px;top:694px;width:1px;height:6px;background:#d0d0d0"></div>
<div style="left:634px;top:694px;width:1px;height:6px;background:#d0d0d0"></div>
<div style="left:170px;top:700px;width:1158px;height:7px;background:#cbcbcb"></div>
<div style="left:168px;top:707px;width:1161px;height:1px;background:#8c8c8c"></div>
<div style="left:742px;top:704px;width:3px;height:2px;background:#5a5a5a;border-radius:1px"></div>
<div style="left:746px;top:704px;width:3px;height:2px;background:#5a5a5a;border-radius:1px"></div>
<div style="left:750px;top:704px;width:3px;height:2px;background:#5a5a5a;border-radius:1px"></div>
<div style="left:754px;top:704px;width:3px;height:2px;background:#5a5a5a;border-radius:1px"></div>
<div style="left:758px;top:704px;width:3px;height:2px;background:#5a5a5a;border-radius:1px"></div>
<div style="left:168px;top:708px;width:1161px;height:2px;background:#cbcbcb"></div>
<div style="left:27px;top:710px;width:1316px;height:1px;background:#d8d8d8"></div>
<div style="left:22px;top:716px;width:1321px;height:2px;background:#e0e0e0"></div>
<svg style="left:662px;top:721px" width="39" height="18" viewBox="0 0 39 18"><defs><linearGradient id="sg" x1="0" y1="0" x2="0" y2="1"><stop offset="0" stop-color="#8cd6f2"/><stop offset="1" stop-color="#8aaede"/></linearGradient></defs><path d="M0 0h39L20 18H0z" fill="url(#sg)"/><text x="0.5" y="14.5" font-family="Liberation Sans" font-weight="bold" font-size="13.5" fill="#fafafa" letter-spacing="-1" stroke="#fafafa" stroke-width="0.6">SAP</text></svg>
<svg style="left:1335px;top:727px" width="9" height="8" viewBox="0 0 9 8"><path d="M4 0.5L1 4l3 3.5M8 0.5L5 4l3 3.5" stroke="#555" stroke-width="1.6" fill="none"/></svg>
<svg style="left:1346px;top:734px" width="14" height="14" viewBox="0 0 14 14"><path d="M1 13L13 1M6 13L13 6M10 13l3-3" stroke="#cfcfcf" stroke-width="1.2"/></svg>
<div style="left:330px;top:241px;width:73px;height:23px;background:linear-gradient(90deg,#c4c8cc,#d0d4d9 80%,#e6ebf2)"></div>
<div style="left:336px;top:246px;width:58px;height:10px;background:#a9adb2;filter:blur(3px);opacity:0.7"></div>
<div style="left:330px;top:257px;width:73px;height:7px;background:linear-gradient(rgba(233,239,247,0),#e4e9f0)"></div>
<div style="left:204px;top:577px;width:59px;height:27px;background:linear-gradient(#e8ebef,#dfe4ea 40%,#c9cfd6)"></div>
<div style="left:212px;top:584px;width:44px;height:12px;background:#b9cad9;filter:blur(3px);opacity:0.8"></div>
<div style="left:499px;top:575px;width:119px;height:28px;background:linear-gradient(#e8ebef,#dfe4ea 40%,#c9cfd6)"></div>
<div style="left:507px;top:583px;width:44px;height:12px;background:#b9cad9;filter:blur(3px);opacity:0.8"></div>
<div style="left:560px;top:583px;width:50px;height:12px;background:#b9cad9;filter:blur(3px);opacity:0.8"></div>
</body></html>
